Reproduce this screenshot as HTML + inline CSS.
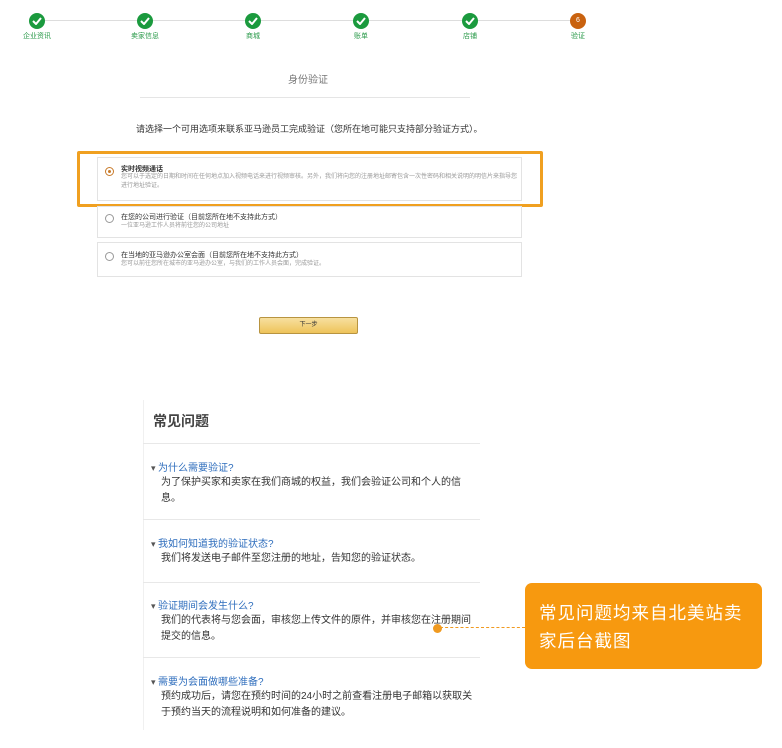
<!DOCTYPE html>
<html><head><meta charset="utf-8"><style>
body{margin:0;width:782px;height:748px;background:#fff;position:relative;overflow:hidden;font-family:"Liberation Sans","Noto Sans CJK SC",sans-serif;}
.a{position:absolute;white-space:nowrap;}
.c{position:absolute;width:16px;height:16px;border-radius:50%;background:#1b9a3e;top:13px;}
.c svg{position:absolute;left:3px;top:4px}
.lb{position:absolute;top:31px;font-size:7px;color:#2a9a4a;transform:translateX(-50%);}
.opt{position:absolute;border:1px solid #e3e3e3;left:97px;width:423px;}
.rd{position:absolute;left:7px;width:7px;height:7px;border:1px solid #999;border-radius:50%;}
.t1{position:absolute;left:23px;font-size:7px;color:#333;}
.t2{position:absolute;left:23px;font-size:6px;color:#999;line-height:9px;}
.hr{position:absolute;left:143px;width:337px;height:1px;background:#e8e8e8;}
.q{position:absolute;left:151px;font-size:10px;color:#2f6ebd;}
.an{position:absolute;left:161px;font-size:10px;color:#333;line-height:16px;width:312px;}
.q:before{content:"▾ ";color:#555;font-size:9px}
</style></head><body>
<div class="a" style="left:37px;top:20px;width:541px;height:1px;background:#ddd"></div>
<div class="c" style="left:29px"><svg width="10" height="8"><path d="M1 4 L4 7 L9 1" stroke="#fff" stroke-width="2" fill="none"/></svg></div>
<div class="c" style="left:137px"><svg width="10" height="8"><path d="M1 4 L4 7 L9 1" stroke="#fff" stroke-width="2" fill="none"/></svg></div>
<div class="c" style="left:245px"><svg width="10" height="8"><path d="M1 4 L4 7 L9 1" stroke="#fff" stroke-width="2" fill="none"/></svg></div>
<div class="c" style="left:353px"><svg width="10" height="8"><path d="M1 4 L4 7 L9 1" stroke="#fff" stroke-width="2" fill="none"/></svg></div>
<div class="c" style="left:462px"><svg width="10" height="8"><path d="M1 4 L4 7 L9 1" stroke="#fff" stroke-width="2" fill="none"/></svg></div>
<div class="c" style="left:570px;background:#c9620f;color:#fff;font-size:7px;text-align:center;line-height:16px">6</div>
<div class="lb" style="left:37px">企业资讯</div><div class="lb" style="left:145px">卖家信息</div><div class="lb" style="left:253px">商城</div><div class="lb" style="left:361px">账单</div><div class="lb" style="left:470px">店铺</div><div class="lb" style="left:578px">验证</div>
<div class="a" style="left:288px;top:71px;font-size:10px;color:#777">身份验证</div>
<div class="a" style="left:140px;top:97px;width:330px;height:1px;background:#e5e5e5"></div>
<div class="a" style="left:136px;top:122px;font-size:9px;color:#333">请选择一个可用选项来联系亚马逊员工完成验证（您所在地可能只支持部分验证方式）。</div>
<div class="opt" style="top:157px;height:42px"><div class="rd" style="top:9px;border-color:#c87a2a"><div style="position:absolute;left:2px;top:2px;width:3px;height:3px;border-radius:50%;background:#c87a2a"></div></div>
<div class="t1" style="top:6px;font-weight:bold">实时视频通话</div>
<div class="t2" style="top:15px">您可以于选定的日期和时间在任何地点加入视频电话来进行视频审核。另外，我们将向您的注册地址邮寄包含一次性密码和相关说明的明信片来指导您<br>进行地址验证。</div></div>
<div class="a" style="left:77px;top:151px;width:460px;height:50px;border:3px solid #f0a020;border-radius:2px"></div>
<div class="opt" style="top:206px;height:30px"><div class="rd" style="top:7px"></div><div class="t1" style="top:5px">在您的公司进行验证（目前您所在地不支持此方式）</div><div class="t2" style="top:15px">一位亚马逊工作人员将前往您的公司地址</div></div>
<div class="opt" style="top:242px;height:33px"><div class="rd" style="top:9px"></div><div class="t1" style="top:7px">在当地的亚马逊办公室会面（目前您所在地不支持此方式）</div><div class="t2" style="top:17px">您可以前往您所在城市的亚马逊办公室，与我们的工作人员会面，完成验证。</div></div>
<div class="a" style="left:259px;top:317px;width:97px;height:15px;border:1px solid #b89440;border-radius:2px;background:linear-gradient(#f7e0a0,#eec35a);font-size:6px;text-align:center;line-height:15px;color:#333">下一步</div>
<div class="a" style="left:143px;top:400px;width:1px;height:330px;background:#f0f0f0"></div>
<div class="a" style="left:153px;top:411px;font-size:14px;font-weight:bold;color:#444">常见问题</div>
<div class="hr" style="top:443px"></div><div class="hr" style="top:519px"></div><div class="hr" style="top:582px"></div><div class="hr" style="top:657px"></div>
<div class="q a" style="top:459px">为什么需要验证?</div>
<div class="an a" style="top:475px;white-space:normal">为了保护买家和卖家在我们商城的权益，我们会验证公司和个人的信息。</div>
<div class="q a" style="top:535px">我如何知道我的验证状态?</div>
<div class="an a" style="top:551px">我们将发送电子邮件至您注册的地址，告知您的验证状态。</div>
<div class="q a" style="top:597px">验证期间会发生什么?</div>
<div class="an a" style="top:613px;white-space:normal">我们的代表将与您会面，审核您上传文件的原件，并审核您在注册期间提交的信息。</div>
<div class="q a" style="top:673px">需要为会面做哪些准备?</div>
<div class="an a" style="top:689px;white-space:normal">预约成功后，请您在预约时间的24小时之前查看注册电子邮箱以获取关于预约当天的流程说明和如何准备的建议。</div>
<div class="a" style="left:440px;top:627px;width:85px;border-top:1.5px dashed #f09a20"></div>
<div class="a" style="left:433px;top:624px;width:9px;height:9px;border-radius:50%;background:#f09a20"></div>
<div class="a" style="left:525px;top:583px;width:237px;height:86px;border-radius:7px;background:#f7990f"></div>
<div class="a" style="left:539px;top:599px;font-size:17.5px;color:#fff;line-height:28px;letter-spacing:1px">常见问题均来自北美站卖<br>家后台截图</div>
</body></html>
